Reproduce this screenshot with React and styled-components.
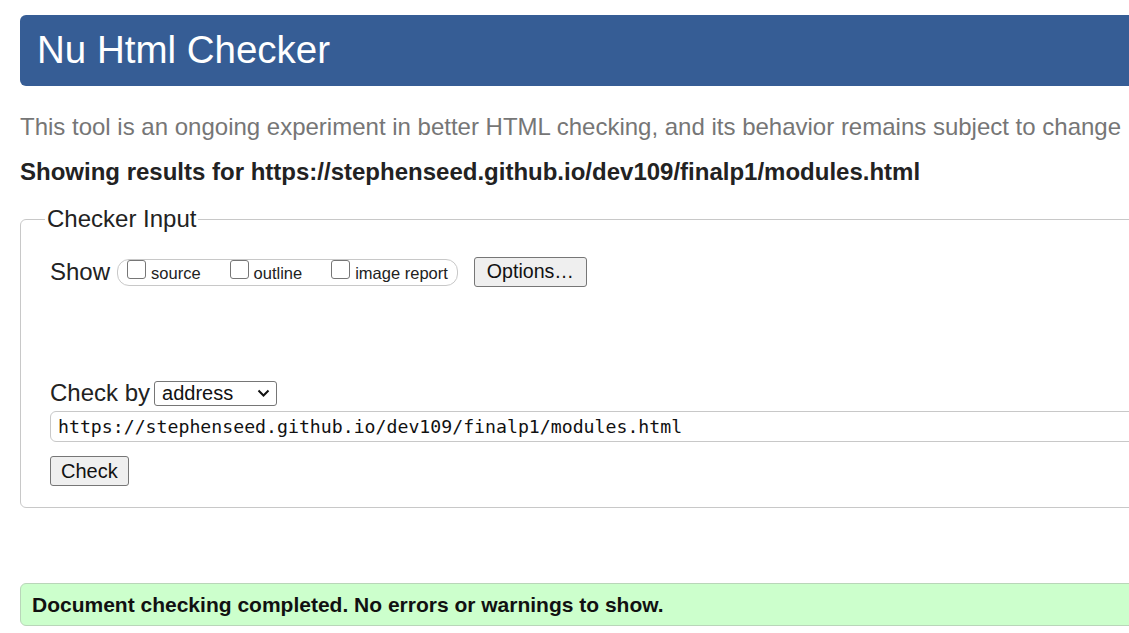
import React from "react";
import styled, { createGlobalStyle } from "styled-components";

const Global = createGlobalStyle`
  html, body { margin: 0; padding: 0; background: #fff; overflow: hidden; }
  body { font-family: "Liberation Sans", Arial, sans-serif; color: #222; }
  * { box-sizing: border-box; }
`;

const Page = styled.main`
  width: 1200px;
  padding: 15px 0 0 20px;
  display: flex;
  flex-direction: column;
`;

const Header = styled.header`
  height: 71px;
  background: #365d95;
  border-radius: 6px 0 0 6px;
  display: flex;
  align-items: center;
  padding-left: 17px;
`;

const Title = styled.h1`
  margin: 0;
  font-size: 38.5px;
  font-weight: normal;
  color: #fff;
  line-height: 1;
`;

const Intro = styled.p`
  margin: 27px 0 0;
  font-size: 24px;
  color: #767676;
  line-height: 28px;
  white-space: nowrap;
`;

const Results = styled.p`
  margin: 18px 0 0;
  font-size: 24px;
  font-weight: bold;
  line-height: 26px;
  color: #222;
  white-space: nowrap;
`;

const Fieldset = styled.fieldset`
  margin: 21px 0 0;
  padding: 0 0 21px;
  border: 1px solid #c8c8c8;
  border-radius: 6px 0 0 6px;
  min-width: 0;
`;

const Legend = styled.legend`
  margin-left: 24px;
  padding: 0 2px;
  font-size: 24px;
  line-height: 26px;
  color: #222;
`;

const Body = styled.div`
  padding-left: 29px;
  display: flex;
  flex-direction: column;
`;

const Row = styled.div`
  display: flex;
  align-items: center;
  margin-top: ${(p) => p.$top}px;
`;

const Label = styled.span`
  font-size: 24px;
  color: #222;
  margin-right: ${(p) => p.$gap}px;
`;

const Group = styled.div`
  display: flex;
  align-items: flex-end;
  height: 27px;
  border: 1px solid #c8c8c8;
  border-radius: 12px;
  padding: 0 9px 3px 9px;
  gap: 29px;
`;

const Opt = styled.label`
  display: flex;
  align-items: flex-end;
  gap: 5px;
  font-size: 16.5px;
  line-height: 18px;
  color: #222;
`;

const Box = styled.input.attrs({ type: "checkbox" })`
  appearance: none;
  margin: 0 0 3px;
  width: 19px;
  height: 19px;
  border: 1px solid #767676;
  border-radius: 3px;
  background: #fff;
`;

const Button = styled.button`
  font-family: "Liberation Sans", Arial, sans-serif;
  font-size: ${(p) => p.$size}px;
  color: #111;
  height: 30px;
  padding: 0 ${(p) => p.$pad}px;
  margin-left: ${(p) => p.$left || 0}px;
  background: #efefef;
  border: 1px solid #767676;
  border-radius: 3px;
  line-height: 1;
`;

const SelectWrap = styled.div`
  position: relative;
  width: 123px;
  height: 25px;
  margin-left: 4px;
`;

const Select = styled.select`
  appearance: none;
  width: 100%;
  height: 100%;
  font-family: "Liberation Sans", Arial, sans-serif;
  font-size: 20px;
  color: #111;
  padding: 0 0 0 7px;
  border: 1px solid #767676;
  border-radius: 3px;
  background: #fff;
`;

const Chevron = styled.svg`
  position: absolute;
  right: 7px;
  top: 8px;
  pointer-events: none;
`;

const UrlInput = styled.input`
  margin-top: 4px;
  height: 31px;
  width: 100%;
  border: 1px solid #c8c8c8;
  border-radius: 6px 0 0 6px;
  padding: 0 0 0 7px;
  font-family: "DejaVu Sans Mono", "Liberation Mono", monospace;
  font-size: 18.2px;
  color: #111;
`;

const CheckRow = styled.div`
  margin-top: 14px;
`;

const Success = styled.div`
  margin-top: 75px;
  height: 43px;
  background: #ccffcc;
  border: 1px solid #b9d6b9;
  border-radius: 6px 0 0 6px;
  display: flex;
  align-items: center;
  padding-left: 11px;
  font-size: 21px;
  font-weight: bold;
  color: #111;
  white-space: nowrap;
`;

export default function App() {
  const url = "https://stephenseed.github.io/dev109/finalp1/modules.html";
  return (
    <Page>
      <Global />
      <Header>
        <Title>Nu Html Checker</Title>
      </Header>
      <Intro>
        This tool is an ongoing experiment in better HTML checking, and its behavior remains subject to change
      </Intro>
      <Results>Showing results for {url}</Results>
      <Fieldset>
        <Legend>Checker Input</Legend>
        <Body>
          <Row $top={25}>
            <Label $gap={7}>Show</Label>
            <Group>
              <Opt><Box />source</Opt>
              <Opt><Box />outline</Opt>
              <Opt><Box />image report</Opt>
            </Group>
            <Button $size={19.6} $pad={12} $left={16}>Options…</Button>
          </Row>
          <Row $top={92}>
            <Label $gap={0}>Check by</Label>
            <SelectWrap>
              <Select defaultValue="address">
                <option value="address">address</option>
                <option value="file">file upload</option>
                <option value="text">text input</option>
              </Select>
              <Chevron width="13" height="9" viewBox="0 0 13 9">
                <path d="M1.5 1.5 L6.5 6.5 L11.5 1.5" fill="none" stroke="#111" strokeWidth="2" />
              </Chevron>
            </SelectWrap>
          </Row>
          <UrlInput defaultValue={url} />
          <CheckRow>
            <Button $size={20} $pad={10}>Check</Button>
          </CheckRow>
        </Body>
      </Fieldset>
      <Success>Document checking completed. No errors or warnings to show.</Success>
    </Page>
  );
}
